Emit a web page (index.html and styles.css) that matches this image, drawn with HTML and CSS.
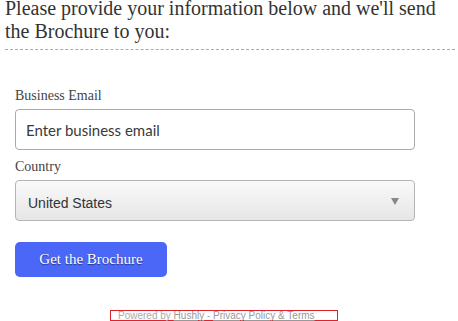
FILE: index.html
```html
<!DOCTYPE html>
<html lang="en">

<head>
    <meta charset="UTF-8">
    <meta name="viewport" content="width=device-width, initial-scale=1.0">
    <title>Brochure</title>
    <link rel="stylesheet" href="styles.css">
</head>

<body>
    <div id="intro">
        Please provide your information below and we'll send the Brochure to you:
    </div>

    <form id="brochure-form">
        <label class="field-label" for="email">Business Email</label>
        <input type="text" id="email" class="field" placeholder="Enter business email">

        <label class="field-label" for="country">Country</label>
        <div class="select-wrap">
            <select id="country" class="field select">
                <option>United States</option>
            </select>
            <span class="arrow"></span>
        </div>

        <button type="button" id="submit-btn">Get the Brochure</button>
    </form>

    <div id="footer">
        Powered by <a href="#">Hushly</a> - <a href="#">Privacy Policy &amp; Terms</a>
    </div>
</body>

</html>
```

FILE: styles.css
```css
* {
    margin: 0;
    padding: 0;
    box-sizing: border-box;
}

html,
body {
    background-color: white;
    height: 100%;
    overflow: hidden;
}

#intro {
    font-family: "Liberation Serif", serif;
    font-size: 20px;
    line-height: 23px;
    color: #333;
    margin: -3px 3px 0 5px;
    padding-bottom: 6px;
    border-bottom: 1px dashed #aaa;
}

#brochure-form {
    display: flex;
    flex-direction: column;
    padding: 38px 0 0 15px;
    width: 415px;
}

.field-label {
    font-family: "Liberation Serif", serif;
    font-size: 14px;
    line-height: 16px;
    color: #444;
    margin-bottom: 5px;
}

.field {
    width: 400px;
    height: 41px;
    border: 1px solid #aaa;
    border-radius: 4px;
    margin-bottom: 9px;
    outline: none;
}

input.field {
    font-family: Lato, sans-serif;
    font-size: 15px;
    padding-left: 10px;
    color: #333;
}

input.field::placeholder {
    color: #3a3a3a;
}

.select-wrap {
    position: relative;
    width: 400px;
    margin-bottom: 21px;
}

.select {
    -webkit-appearance: none;
    appearance: none;
    font-family: "Liberation Sans", sans-serif;
    font-size: 14px;
    color: #333;
    padding: 4px 0 0 12px;
    margin-bottom: 0;
    background: linear-gradient(#f9f9f9, #e6e6e6);
    border-color: #b4b4b4;
}

.arrow {
    position: absolute;
    right: 16px;
    top: 18px;
    width: 0;
    height: 0;
    border-left: 4px solid transparent;
    border-right: 4px solid transparent;
    border-top: 7px solid #888;
}

#submit-btn {
    width: 152px;
    height: 35px;
    background-color: #4b67f7;
    color: white;
    border: none;
    border-radius: 5px;
    font-family: "Liberation Serif", serif;
    font-size: 15px;
    text-shadow: 0 1px 1px rgba(0, 0, 0, 0.5);
}

#footer {
    margin: 33px 0 0 110px;
    width: 228px;
    border: 1px solid #e0202a;
    font-family: "Liberation Sans", sans-serif;
    font-size: 10px;
    line-height: 9px;
    color: #aaa;
    padding-left: 7px;
    white-space: nowrap;
}

#footer a {
    color: #999;
}
```
